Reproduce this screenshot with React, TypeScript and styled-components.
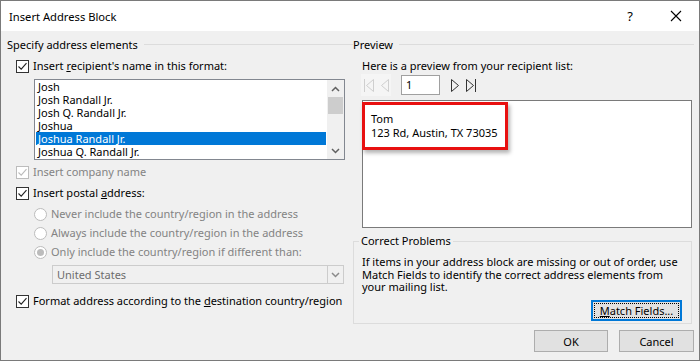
import React from 'react';
import styled, { createGlobalStyle } from 'styled-components';

const GlobalStyle = createGlobalStyle`
  html, body { margin: 0; padding: 0; background: #f0f0f0; }
  body { font-family: "Segoe UI", "Noto Sans", sans-serif; font-size: 11px; color: #000; }
  * { box-sizing: border-box; }
`;

const Window = styled.div`
  width: 700px;
  height: 361px;
  border: 1px solid #7a7a7a;
  background: #f0f0f0;
  display: flex;
  flex-direction: column;
  overflow: hidden;
`;

const TitleBar = styled.div`
  height: 30px;
  background: #fff;
  display: flex;
  align-items: center;
  padding-left: 8px;
  font-size: 11.2px;
`;

const TitleText = styled.div`
  flex: 1;
`;

const TitleButton = styled.div<{ $w: number }>`
  width: ${(p) => p.$w}px;
  height: 30px;
  display: flex;
  align-items: center;
  justify-content: center;
  font-size: 13px;
`;

const Body = styled.div`
  flex: 1;
  display: grid;
  grid-template-columns: 346px 1fr;
  padding: 6px 5px 0 6px;
`;

const Column = styled.div`
  display: flex;
  flex-direction: column;
`;

const GroupHeader = styled.div`
  height: 15px;
  display: flex;
  align-items: center;
  line-height: 15px;
  white-space: nowrap;
  &::after {
    content: '';
    flex: 1;
    height: 1px;
    background: #dcdcdc;
    margin-left: 6px;
  }
`;

const Row = styled.label<{ $top: number; $indent: number; $disabled?: boolean }>`
  display: flex;
  align-items: center;
  gap: 4px;
  height: 16px;
  line-height: 16px;
  margin-top: ${(p) => p.$top}px;
  margin-left: ${(p) => p.$indent}px;
  color: ${(p) => (p.$disabled ? '#838383' : '#000')};
  white-space: nowrap;
`;

const Box = styled.span<{ $disabled?: boolean }>`
  width: 13px;
  height: 13px;
  border: 1px solid ${(p) => (p.$disabled ? '#bcbcbc' : '#333')};
  background: #fff;
  display: flex;
  align-items: center;
  justify-content: center;
  flex: none;
`;

const Radio = styled.span`
  width: 13px;
  height: 13px;
  border: 1px solid #bcbcbc;
  border-radius: 50%;
  background: #fff;
  display: flex;
  align-items: center;
  justify-content: center;
  flex: none;
`;

const RadioDot = styled.span`
  width: 7px;
  height: 7px;
  border-radius: 50%;
  background: #bcbcbc;
`;

const ListBox = styled.div`
  margin-top: 5px;
  margin-left: 27px;
  width: 311px;
  height: 81px;
  border: 1px solid #828790;
  background: #fff;
  display: flex;
`;

const ListItems = styled.div`
  flex: 1;
  overflow: hidden;
  padding: 0 1px;
`;

const ListItem = styled.div<{ $selected?: boolean }>`
  height: 13px;
  line-height: 13px;
  padding-left: 2px;
  background: ${(p) => (p.$selected ? '#0078d7' : 'transparent')};
  color: ${(p) => (p.$selected ? '#fff' : '#000')};
  white-space: nowrap;
`;

const ScrollBar = styled.div`
  width: 17px;
  background: #f0f0f0;
  display: flex;
  flex-direction: column;
`;

const ScrollArrow = styled.div`
  height: 17px;
  display: flex;
  align-items: center;
  justify-content: center;
`;

const ScrollTrack = styled.div`
  flex: 1;
`;

const ScrollThumb = styled.div`
  height: 17px;
  margin: 0 1px;
  background: #cdcdcd;
`;

const Combo = styled.div`
  margin-top: 5px;
  margin-left: 45px;
  width: 292px;
  height: 19px;
  border: 1px solid #cccccc;
  background: #f0f0f0;
  color: #6d6d6d;
  display: flex;
  align-items: center;
  padding-left: 4px;
`;

const ComboText = styled.div`
  flex: 1;
`;

const ComboButton = styled.div`
  width: 16px;
  height: 17px;
  border-left: 1px solid #cccccc;
  display: flex;
  align-items: center;
  justify-content: center;
`;

const Text = styled.div<{ $top: number; $indent: number }>`
  margin-top: ${(p) => p.$top}px;
  margin-left: ${(p) => p.$indent}px;
  line-height: 13px;
  white-space: nowrap;
`;

const NavRow = styled.div`
  margin-top: 3px;
  margin-left: 8px;
  height: 20px;
  display: flex;
  align-items: center;
`;

const NavGroup = styled.div<{ $w: number; $disabled?: boolean }>`
  width: ${(p) => p.$w}px;
  height: 22px;
  display: flex;
  align-items: center;
  justify-content: space-around;
  background: ${(p) => (p.$disabled ? '#f5f5f5' : 'transparent')};
`;

const RecordInput = styled.div`
  margin-left: 10px;
  margin-right: 8px;
  width: 39px;
  height: 20px;
  border: 1px solid #a0a0a0;
  background: #fff;
  padding-left: 4px;
  line-height: 18px;
`;

const PreviewBox = styled.div`
  margin-top: 5px;
  margin-left: 9px;
  width: 330px;
  height: 128px;
  border: 1px solid #7a7a7a;
  background: #fff;
  padding-top: 1px;
`;

const Highlight = styled.div`
  margin-left: -1px;
  width: 146px;
  height: 48px;
  border: 3px solid #e81010;
  box-shadow: 2px 3px 4px rgba(0, 0, 0, 0.3);
  padding: 7px 0 0 6px;
  line-height: 14px;
  white-space: nowrap;
`;

const FieldSet = styled.fieldset`
  margin: 6px 0 0 0;
  width: 339px;
  height: 90px;
  border: 1px solid #dcdcdc;
  padding: 0 9px 0 8px;
  display: flex;
  flex-direction: column;
  min-width: 0;
`;

const Legend = styled.legend`
  padding: 0 2px;
  margin-left: -3px;
  line-height: 14px;
`;

const Paragraph = styled.div`
  margin-top: 8px;
  line-height: 12.7px;
  white-space: nowrap;
`;

const ButtonRow = styled.div<{ $top: number }>`
  margin-top: ${(p) => p.$top}px;
  display: flex;
  justify-content: flex-end;
  gap: 11px;
`;

const Button = styled.div<{ $w: number; $focused?: boolean }>`
  width: ${(p) => p.$w}px;
  height: ${(p) => (p.$focused ? 21 : 22)}px;
  background: #e1e1e1;
  border: ${(p) => (p.$focused ? '2px solid #0078d7' : '1px solid #adadad')};
  display: flex;
  align-items: center;
  justify-content: center;
  white-space: nowrap;
  position: relative;
  ${(p) =>
    p.$focused &&
    `&::after { content: ''; position: absolute; inset: 1px; border: 1px dotted #000; }`}
`;

const Check = ({ color = '#222' }: { color?: string }) => (
  <svg width="11" height="11" viewBox="0 0 11 11">
    <path d="M1.5 5.5 L4.2 8.2 L9.5 2.2" fill="none" stroke={color} strokeWidth="1.1" />
  </svg>
);

const Chevron = ({ up = false, color = '#606060' }: { up?: boolean; color?: string }) => (
  <svg width="9" height="6" viewBox="0 0 9 6">
    <path d={up ? 'M1 5 L4.5 1.5 L8 5' : 'M1 1 L4.5 4.5 L8 1'} fill="none" stroke={color} strokeWidth="1.5" />
  </svg>
);

const NavIcon = ({ dir, bar, color }: { dir: 'l' | 'r'; bar?: boolean; color: string }) => (
  <svg width="12" height="15" viewBox="0 0 12 15">
    {dir === 'l' ? (
      <>
        {bar && <path d="M1.5 1 V14" stroke={color} strokeWidth="1" />}
        <path d="M10.5 1.5 L3.5 7.5 L10.5 13.5 Z" fill="none" stroke={color} strokeWidth="1" />
      </>
    ) : (
      <>
        <path d="M1.5 1.5 L8.5 7.5 L1.5 13.5 Z" fill="none" stroke={color} strokeWidth="1" />
        {bar && <path d="M10.5 1 V14" stroke={color} strokeWidth="1" />}
      </>
    )}
  </svg>
);

const names = [
  'Josh',
  'Josh Randall Jr.',
  'Josh Q. Randall Jr.',
  'Joshua',
  'Joshua Randall Jr.',
  'Joshua Q. Randall Jr.',
];

export default function App() {
  return (
    <>
      <GlobalStyle />
      <Window>
        <TitleBar>
          <TitleText>Insert Address Block</TitleText>
          <TitleButton $w={46}>?</TitleButton>
          <TitleButton $w={46}>
            <svg width="12" height="12" viewBox="0 0 12 12">
              <path d="M1 1 L11 11 M11 1 L1 11" stroke="#000" strokeWidth="1.1" />
            </svg>
          </TitleButton>
        </TitleBar>
        <Body>
          <Column>
            <GroupHeader>Specify address elements</GroupHeader>
            <Row $top={6} $indent={9}>
              <Box><Check /></Box>
              <span>Insert <u>r</u>ecipient's name in this format:</span>
            </Row>
            <ListBox>
              <ListItems>
                {names.map((n, i) => (
                  <ListItem key={n} $selected={i === 4}>{n}</ListItem>
                ))}
              </ListItems>
              <ScrollBar>
                <ScrollArrow><Chevron up /></ScrollArrow>
                <ScrollTrack><ScrollThumb /></ScrollTrack>
                <ScrollArrow><Chevron /></ScrollArrow>
              </ScrollBar>
            </ListBox>
            <Row $top={4} $indent={9} $disabled>
              <Box $disabled><Check color="#bcbcbc" /></Box>
              <span>Insert company name</span>
            </Row>
            <Row $top={5} $indent={9}>
              <Box><Check /></Box>
              <span>Insert postal <u>a</u>ddress:</span>
            </Row>
            <Row $top={5} $indent={27} $disabled>
              <Radio />
              <span>Never include the country/region in the address</span>
            </Row>
            <Row $top={3} $indent={27} $disabled>
              <Radio />
              <span>Always include the country/region in the address</span>
            </Row>
            <Row $top={3} $indent={27} $disabled>
              <Radio><RadioDot /></Radio>
              <span>Only include the country/region if different than:</span>
            </Row>
            <Combo>
              <ComboText>United States</ComboText>
              <ComboButton><Chevron color="#8a8a8a" /></ComboButton>
            </Combo>
            <Row $top={9} $indent={9}>
              <Box><Check /></Box>
              <span>Format address according to the <u>d</u>estination country/region</span>
            </Row>
          </Column>
          <Column>
            <GroupHeader>Preview</GroupHeader>
            <Text $top={7} $indent={9}>Here is a preview from your recipient list:</Text>
            <NavRow>
              <NavGroup $w={30} $disabled>
                <NavIcon dir="l" bar color="#cfcfcf" />
                <NavIcon dir="l" color="#cfcfcf" />
              </NavGroup>
              <RecordInput>1</RecordInput>
              <NavGroup $w={30}>
                <NavIcon dir="r" color="#333" />
                <NavIcon dir="r" bar color="#333" />
              </NavGroup>
            </NavRow>
            <PreviewBox>
              <Highlight>
                <div>Tom</div>
                <div>123 Rd, Austin, TX 73035</div>
              </Highlight>
            </PreviewBox>
            <FieldSet>
              <Legend>Correct Problems</Legend>
              <Paragraph>
                If items in your address block are missing or out of order, use
                <br />
                Match Fields to identify the correct address elements from
                <br />
                your mailing list.
              </Paragraph>
              <ButtonRow $top={6}>
                <Button $w={91} $focused>
                  <span><u>M</u>atch Fields...</span>
                </Button>
              </ButtonRow>
            </FieldSet>
            <ButtonRow $top={6}>
              <Button $w={74}>OK</Button>
              <Button $w={75}>Cancel</Button>
            </ButtonRow>
          </Column>
        </Body>
      </Window>
    </>
  );
}
